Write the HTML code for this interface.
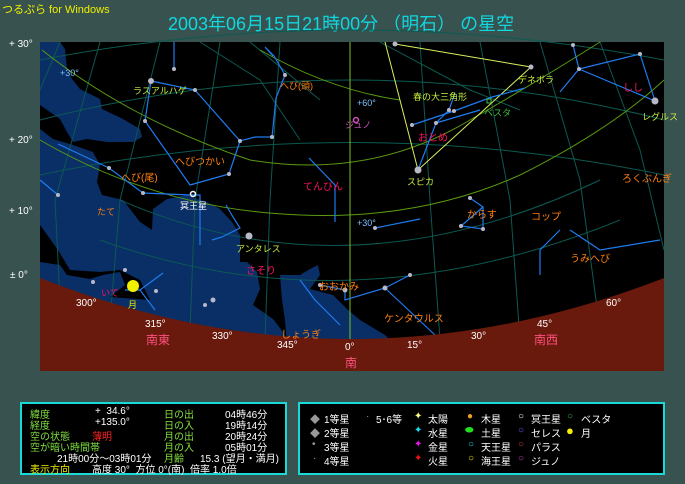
<!DOCTYPE html>
<html><head><meta charset="utf-8"><style>
html,body{margin:0;padding:0}
body{width:685px;height:484px;background:#38524f;overflow:hidden;position:relative;font-family:"Liberation Sans","Noto Sans CJK JP",sans-serif}
.t{position:absolute;white-space:nowrap}
.panel{position:absolute;background:#000;border:2px solid #18d8d8;box-sizing:border-box}
.p1 span,.p2 span{position:absolute;font-size:10px;white-space:nowrap}
</style></head><body>
<div class="t" style="left:2px;top:1px;font-size:11px;color:#f0f000">つるぷら for Windows</div>
<div class="t" style="left:168px;top:10px;font-size:18px;color:#10d8e0">2003年06月15日21時00分 （明石） の星空</div>
<div class="t" style="left:9px;top:39px;font-size:10px;color:#fff">+ 30°</div>
<div class="t" style="left:9px;top:135px;font-size:10px;color:#fff">+ 20°</div>
<div class="t" style="left:9px;top:206px;font-size:10px;color:#fff">+ 10°</div>
<div class="t" style="left:10px;top:270px;font-size:10px;color:#fff">± 0°</div>
<svg style="position:absolute;left:0;top:0" width="685" height="484" viewBox="0 0 685 484">
<rect x="40" y="42" width="624" height="329" fill="#000"/>
<g fill="#0a2e66">
<path d="M40,42 L60,42 L65,49 L67,69 L72,79 L80,89 L100,99 L102,109 L123,119 L140,129 L142,137 L133,142 L107,142 L87,139 L73,142 L67,132 L60,119 L40,105 Z"/>
<path d="M40,129 L53,139 L73,145 L93,152 L100,165 L97,182 L102,195 L123,200 L140,222 L152,230 L153,209 L167,199 L187,195 L197,199 L207,202 L220,209 L232,222 L240,235 L240,262 L247,262 L257,272 L260,289 L253,305 L273,319 L283,332 L290,345 L80,345 L40,300 L40,262 L60,265 L67,275 L90,279 L103,275 L120,272 L125,285 L110,297 L150,300 L140,280 L120,270 L100,272 L70,270 L58,250 L40,225 Z"/>
<path d="M280,275 L300,275 L310,269 L318,265 L320,275 L310,289 L333,295 L347,309 L360,320 L385,335 L395,345 L287,345 L285,320 L282,300 Z"/>
</g>
<g fill="none" stroke="#0b5a52" stroke-width="1">
<path d="M40,60 Q350,0 664,60"/><path d="M40,120 Q350,40 664,120"/><path d="M40,175 Q350,110 664,175"/>
<path d="M60,42 L40,90"/><path d="M100,42 L55,200 L60,300"/><path d="M160,42 L120,200 L110,320"/><path d="M220,42 L195,200 L190,330"/><path d="M280,42 L270,200 L265,340"/><path d="M420,42 L430,200 L440,340"/><path d="M480,42 L510,200 L520,340"/><path d="M540,42 L580,180 L600,330"/><path d="M600,42 L640,150 L664,250"/>
<path d="M200,42 L260,80 L300,140"/><path d="M250,42 L320,100"/><path d="M380,42 L470,90 L520,110"/>
<path d="M120,200 Q350,300 600,180"/><path d="M100,240 Q350,330 620,220"/>
</g>
<g fill="none" stroke="#5a9a10" stroke-width="1">
<path d="M42,50 Q130,120 250,160 Q370,180 470,120 Q540,80 600,42"/>
<path d="M40,140 Q160,210 300,215 Q420,220 520,175 Q610,130 664,80"/>
<path d="M260,50 Q330,90 400,100"/>
</g>
<line x1="350" y1="42" x2="350" y2="340" stroke="#7cc020"/>
<g fill="none" stroke="#d8f060" stroke-width="1">
<path d="M385,42 L418,170 L531,67"/><path d="M395,44 L531,67"/>
</g>
<g fill="none" stroke="#1e7cf0" stroke-width="1.2">
<path d="M174,42 L174,69"/><path d="M151,81 L195,90 L240,141 L255,137 L272,137 L276,98 L285,75 L274,56 L265,47 L273,56"/>
<path d="M151,81 L145,121 L190,185 L229,174 L240,141"/>
<path d="M58,144 L109,168 L143,193 L190,195 L200,195 L200,245"/>
<path d="M40,180 L58,195"/>
<path d="M309,158 L335,185 L335,222"/>
<path d="M226,205 L233,217 L240,228 L222,237 L212,240"/>
<path d="M418,170 L436,123 L449,110 L455,93"/><path d="M412,125 L454,111 L492,97 L525,88"/><path d="M436,123 L480,110"/>
<path d="M573,45 L579,69 L560,92"/><path d="M579,69 L655,101"/><path d="M579,69 L640,54 L655,101"/>
<path d="M470,198 L483,207 L461,226 L483,229 L483,207"/><path d="M375,228 L420,219"/>
<path d="M560,230 L540,250 L540,275"/><path d="M570,230 L600,250 L660,240"/>
<path d="M163,273 L140,290 L125,290"/><path d="M140,290 L155,310"/>
<path d="M320,285 L345,290 L345,300 L385,288 L410,275"/><path d="M385,288 L435,335"/>
<path d="M300,280 L315,300 L340,325"/>
</g>
<g fill="#b8b8c8">
<circle cx="151" cy="81" r="3"/><circle cx="195" cy="90" r="2"/><circle cx="145" cy="121" r="2"/><circle cx="240" cy="141" r="2"/><circle cx="229" cy="174" r="2"/><circle cx="109" cy="168" r="2"/><circle cx="143" cy="193" r="2"/><circle cx="58" cy="195" r="2"/>
<circle cx="249" cy="236" r="3.5"/><circle cx="272" cy="137" r="2"/><circle cx="285" cy="75" r="2"/><circle cx="174" cy="69" r="2"/>
<circle cx="418" cy="170" r="3.5"/><circle cx="531" cy="67" r="2.5"/><circle cx="655" cy="101" r="3.5"/><circle cx="395" cy="44" r="2.5"/><circle cx="573" cy="45" r="2"/><circle cx="640" cy="54" r="2"/><circle cx="579" cy="69" r="2"/>
<circle cx="436" cy="123" r="2"/><circle cx="412" cy="125" r="2"/><circle cx="454" cy="111" r="2"/><circle cx="449" cy="110" r="2"/>
<circle cx="470" cy="198" r="2"/><circle cx="461" cy="226" r="2"/><circle cx="483" cy="229" r="2"/><circle cx="375" cy="228" r="2"/>
<circle cx="320" cy="285" r="2"/><circle cx="345" cy="290" r="2.5"/><circle cx="385" cy="288" r="2.5"/><circle cx="410" cy="275" r="2"/><circle cx="390" cy="342" r="2"/><circle cx="213" cy="300" r="2.5"/><circle cx="205" cy="305" r="2"/><circle cx="165" cy="330" r="2"/><circle cx="218" cy="348" r="2"/><circle cx="236" cy="338" r="2"/><circle cx="156" cy="291" r="2"/><circle cx="93" cy="282" r="2"/><circle cx="125" cy="270" r="2"/>
</g>
<path d="M40,278 Q350,400 664,278 L664,371 L40,371 Z" fill="#6a1a0c"/>
<circle cx="133" cy="286" r="6" fill="#f0f000"/>
<circle cx="193" cy="194" r="2.5" fill="none" stroke="#fff" stroke-width="1.5"/>
<circle cx="356" cy="120" r="2.5" fill="none" stroke="#d050c0" stroke-width="1.5"/>
<rect x="487" y="99" width="4" height="4" fill="none" stroke="#40c040"/>
</svg>
<div style="position:absolute;left:0;top:0;font-size:9px">
<span class="t" style="left:133px;top:84px;color:#c8f040">ラスアルハゲ</span>
<span class="t" style="left:280px;top:79px;color:#ff8010">へび(頭)</span>
<span class="t" style="left:175px;top:153px;color:#ff8010;font-size:10px">へびつかい</span>
<span class="t" style="left:121px;top:169px;color:#ff8010;font-size:10px">へび(尾)</span>
<span class="t" style="left:97px;top:205px;color:#ff8010">たて</span>
<span class="t" style="left:180px;top:199px;color:#fff">冥王星</span>
<span class="t" style="left:303px;top:178px;color:#ff1060;font-size:10px">てんびん</span>
<span class="t" style="left:236px;top:242px;color:#c8f040">アンタレス</span>
<span class="t" style="left:246px;top:262px;color:#ff1060;font-size:10px">さそり</span>
<span class="t" style="left:319px;top:278px;color:#ff8010;font-size:10px">おおかみ</span>
<span class="t" style="left:384px;top:310px;color:#ff8010;font-size:10px">ケンタウルス</span>
<span class="t" style="left:281px;top:326px;color:#ff8010;font-size:10px">しょうぎ</span>
<span class="t" style="left:101px;top:286px;color:#ff1060">いて</span>
<span class="t" style="left:128px;top:298px;color:#f0f000">月</span>
<span class="t" style="left:413px;top:90px;color:#c8f040">春の大三角形</span>
<span class="t" style="left:484px;top:106px;color:#40c040">ベスタ</span>
<span class="t" style="left:418px;top:129px;color:#ff1060;font-size:10px">おとめ</span>
<span class="t" style="left:407px;top:175px;color:#c8f040">スピカ</span>
<span class="t" style="left:518px;top:73px;color:#c8f040">デネボラ</span>
<span class="t" style="left:623px;top:79px;color:#ff1060;font-size:10px">しし</span>
<span class="t" style="left:642px;top:110px;color:#c8f040">レグルス</span>
<span class="t" style="left:622px;top:170px;color:#ff8010;font-size:10px">ろくぶんぎ</span>
<span class="t" style="left:467px;top:206px;color:#ff8010;font-size:10px">からす</span>
<span class="t" style="left:531px;top:208px;color:#ff8010;font-size:10px">コップ</span>
<span class="t" style="left:570px;top:250px;color:#ff8010;font-size:10px">うみへび</span>
<span class="t" style="left:345px;top:118px;color:#d050c0">ジュノ</span>
<span class="t" style="left:60px;top:68px;color:#80c0ff">+30°</span>
<span class="t" style="left:357px;top:98px;color:#80c0ff">+60°</span>
<span class="t" style="left:357px;top:218px;color:#80c0ff">+30°</span>
</div>
<div style="position:absolute;left:0;top:0;font-size:10px;color:#fff">
<span class="t" style="left:76px;top:298px">300°</span>
<span class="t" style="left:145px;top:319px">315°</span>
<span class="t" style="left:212px;top:331px">330°</span>
<span class="t" style="left:277px;top:340px">345°</span>
<span class="t" style="left:345px;top:342px">0°</span>
<span class="t" style="left:407px;top:340px">15°</span>
<span class="t" style="left:471px;top:331px">30°</span>
<span class="t" style="left:537px;top:319px">45°</span>
<span class="t" style="left:606px;top:298px">60°</span>
<span class="t" style="left:146px;top:331px;color:#ff5080;font-size:12px">南東</span>
<span class="t" style="left:534px;top:331px;color:#ff5080;font-size:12px">南西</span>
<span class="t" style="left:345px;top:354px;color:#ff5080;font-size:12px">南</span>
</div>
<div class="panel p1" style="left:20px;top:402px;width:267px;height:73px">
<span style="left:8px;top:2px;color:#80e040">緯度</span><span style="left:73px;top:2px;color:#fff">+&nbsp;&nbsp;34.6°</span><span style="left:142px;top:2px;color:#80e040">日の出</span><span style="left:203px;top:2px;color:#fff">04時46分</span>
<span style="left:8px;top:13px;color:#80e040">経度</span><span style="left:73px;top:13px;color:#fff">+135.0°</span><span style="left:142px;top:13px;color:#80e040">日の入</span><span style="left:203px;top:13px;color:#fff">19時14分</span>
<span style="left:8px;top:24px;color:#80e040">空の状態</span><span style="left:70px;top:24px;color:#ff2020">薄明</span><span style="left:142px;top:24px;color:#80e040">月の出</span><span style="left:203px;top:24px;color:#fff">20時24分</span>
<span style="left:8px;top:35px;color:#80e040">空が暗い時間帯</span><span style="left:142px;top:35px;color:#80e040">月の入</span><span style="left:203px;top:35px;color:#fff">05時01分</span>
<span style="left:35px;top:46px;color:#fff">21時00分～03時01分</span><span style="left:142px;top:46px;color:#80e040">月齢</span><span style="left:178px;top:46px;color:#fff">15.3 (望月・満月)</span>
<span style="left:8px;top:57px;color:#f0f000">表示方向</span><span style="left:70px;top:57px;color:#fff">高度 30°&nbsp; 方位 0°(南)&nbsp; 倍率 1.0倍</span>
</div>
<div class="panel p2" style="left:298px;top:402px;width:367px;height:73px;color:#fff">
<span style="left:10px;top:7px;color:#999">◆</span><span style="left:24px;top:7px">1等星</span>
<span style="left:10px;top:21px;color:#999">◆</span><span style="left:24px;top:21px">2等星</span>
<span style="left:12px;top:35px;color:#999">•</span><span style="left:24px;top:35px">3等星</span>
<span style="left:13px;top:49px;color:#999">·</span><span style="left:24px;top:49px">4等星</span>
<span style="left:66px;top:7px;color:#999">·</span><span style="left:76px;top:7px">5･6等</span>
<span style="left:114px;top:7px;color:#ffff80">✦</span><span style="left:128px;top:7px">太陽</span>
<span style="left:114px;top:21px;color:#18e0f0">✦</span><span style="left:128px;top:21px">水星</span>
<span style="left:114px;top:35px;color:#f010f0">✦</span><span style="left:128px;top:35px">金星</span>
<span style="left:114px;top:49px;color:#f01010">✦</span><span style="left:128px;top:49px">火星</span>
<span style="left:167px;top:7px;color:#f0a020">●</span><span style="left:181px;top:7px">木星</span>
<span style="left:165px;top:21px;color:#20e020">⬬</span><span style="left:181px;top:21px">土星</span>
<span style="left:168px;top:35px;color:#18d8f0">○</span><span style="left:181px;top:35px">天王星</span>
<span style="left:168px;top:49px;color:#f0f000">○</span><span style="left:181px;top:49px">海王星</span>
<span style="left:218px;top:7px">○</span><span style="left:231px;top:7px">冥王星</span>
<span style="left:218px;top:21px;color:#6060f0">○</span><span style="left:231px;top:21px">セレス</span>
<span style="left:218px;top:35px;color:#c04040">○</span><span style="left:231px;top:35px">パラス</span>
<span style="left:218px;top:49px;color:#c040c0">○</span><span style="left:231px;top:49px">ジュノ</span>
<span style="left:267px;top:7px;color:#40b040">○</span><span style="left:281px;top:7px">ベスタ</span>
<span style="left:266px;top:19px;color:#f0f000;font-size:13px">●</span><span style="left:281px;top:21px">月</span>
</div>
</body></html>
